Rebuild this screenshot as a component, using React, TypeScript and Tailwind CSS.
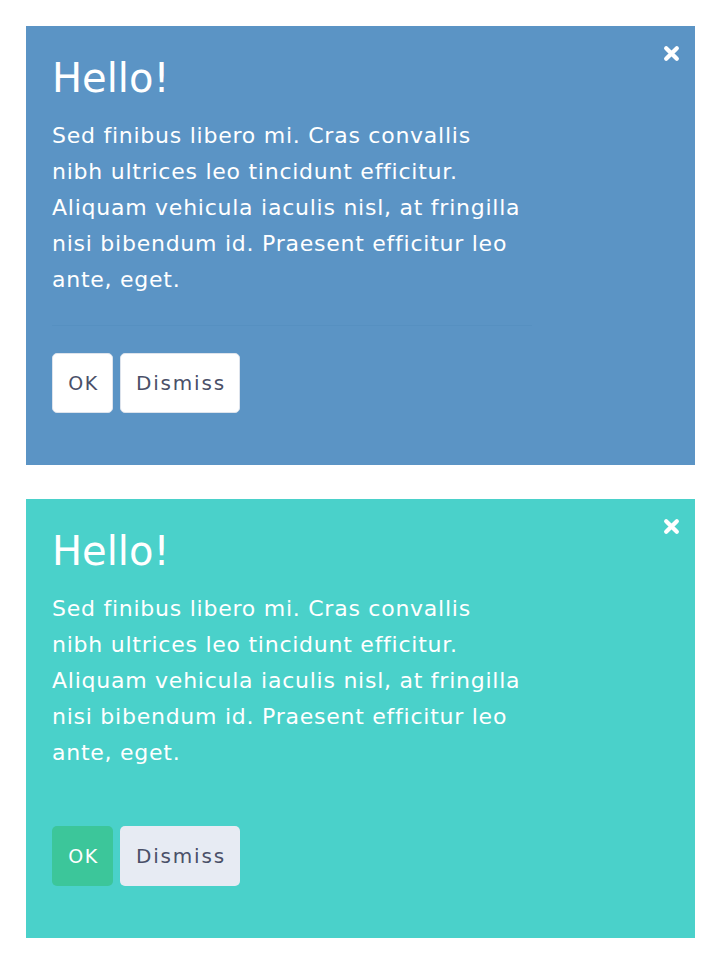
import React from "react";

type Variant = "blue" | "teal";

const lines = [
  "Sed finibus libero mi. Cras convallis",
  "nibh ultrices leo tincidunt efficitur.",
  "Aliquam vehicula iaculis nisl, at fringilla",
  "nisi bibendum id. Praesent efficitur leo",
  "ante, eget.",
];

function CloseIcon() {
  return (
    <svg viewBox="0 0 16 16" className="h-[17px] w-[17px]" fill="none">
      <path
        d="M3 3 L13 13 M13 3 L3 13"
        stroke="white"
        strokeWidth="4"
        strokeLinecap="round"
      />
    </svg>
  );
}

function Notice({ variant }: { variant: Variant }) {
  const blue = variant === "blue";
  return (
    <div
      className={`relative px-[26px] pt-[24px] pb-[52px] ${
        blue ? "bg-[#5b94c5]" : "bg-[#4ad1ca]"
      }`}
    >
      <button className="absolute right-[11px] top-[15px] p-1">
        <CloseIcon />
      </button>
      <h2 className="text-[40px] leading-[56px] font-normal text-white">Hello!</h2>
      <p className="mt-[12px] w-[480px] text-[22px] leading-[36px] tracking-[0.75px] text-white">
        {lines.map((l, i) => (
          <React.Fragment key={i}>
            {l}
            {i < lines.length - 1 && <br />}
          </React.Fragment>
        ))}
      </p>
      <hr
        className={`mt-[27px] mb-[27px] w-[480px] border-0 border-t ${
          blue ? "border-[#5690c1]" : "border-[#4ad1ca]"
        }`}
      />
      <div className="flex gap-[7px]">
        <button
          className={`h-[60px] w-[61px] rounded-[5px] pl-[2px] text-[19px] tracking-[1.5px] ${
            blue
              ? "bg-white border border-[#dde3ec] text-[#4a5068]"
              : "bg-[#3cc69a] text-white"
          }`}
        >
          OK
        </button>
        <button
          className={`h-[60px] w-[120px] rounded-[5px] pl-[2px] text-[20px] tracking-[1.8px] text-[#4a5068] ${
            blue ? "bg-white border border-[#dde3ec]" : "bg-[#e7ebf3]"
          }`}
        >
          Dismiss
        </button>
      </div>
    </div>
  );
}

export default function App() {
  return (
    <div
      className="min-h-screen bg-white pl-[26px] pr-[28px] pt-[26px] pb-[29px] flex flex-col gap-[34px]"
      style={{ fontFamily: '"DejaVu Sans", "Open Sans", sans-serif' }}
    >
      <Notice variant="blue" />
      <Notice variant="teal" />
    </div>
  );
}
